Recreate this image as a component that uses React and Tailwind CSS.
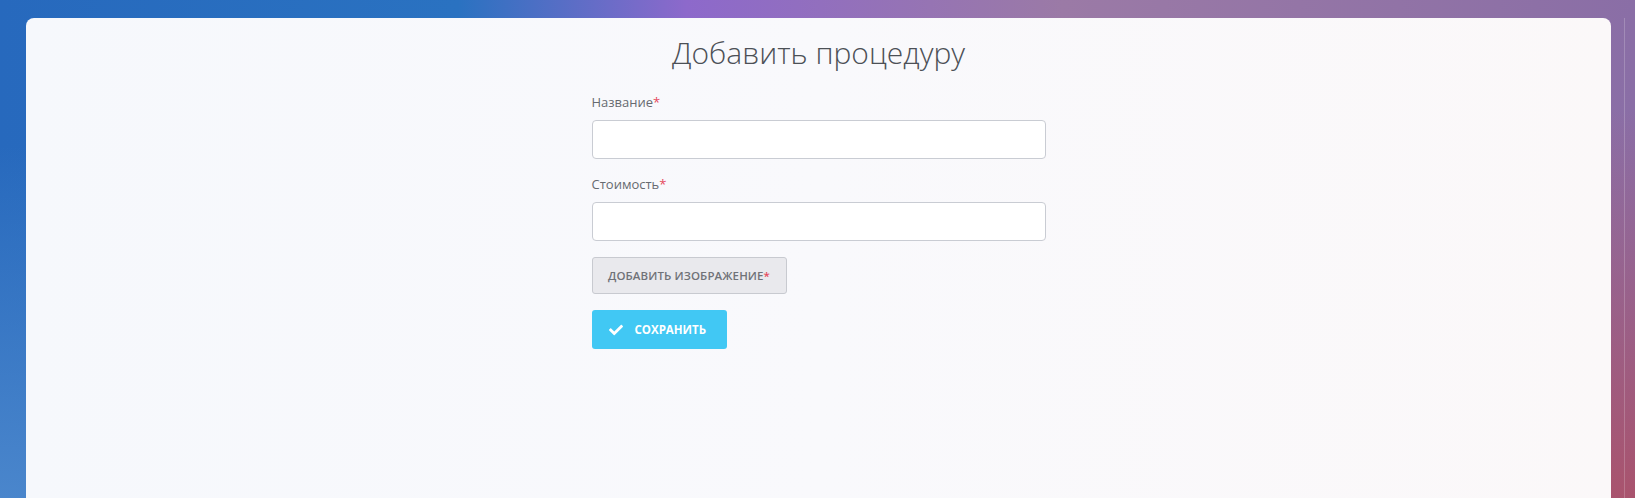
import React from 'react';
import { FaCheck } from 'react-icons/fa';

function Field({ label }) {
  return (
    <div className="flex flex-col">
      <label className="text-[13px] leading-[18px] text-[#666a70] mb-[9px]">
        {label}
        <span className="text-[#e5495d]">*</span>
      </label>
      <input
        type="text"
        className="h-[39px] w-full rounded-[4px] border border-[#c9ccd3] bg-white px-3 text-[14px] outline-none"
      />
    </div>
  );
}

export default function App() {
  return (
    <div
      className="flex h-[498px] w-full overflow-hidden pt-[18px] pl-[26px] bg-[radial-gradient(ellipse_at_100%_100%,#a9536d_0%,rgba(169,83,109,0)_55%),radial-gradient(ellipse_at_0%_100%,#4a86cc_0%,rgba(74,134,204,0)_50%),linear-gradient(90deg,#2769bd_0%,#2a72c1_28%,#8d69cb_42%,#9b7aa6_65%,#8a6ea6_100%)]"
      style={{ fontFamily: '"Open Sans", "Noto Sans", sans-serif' }}
    >
      <div className="flex-1 rounded-t-[8px] bg-[linear-gradient(90deg,#f6f8fc_0%,#f9f9fc_50%,#fbf8f9_100%)]">
        <div className="mx-auto flex w-[454px] flex-col pt-[15px]">
          <h1 className="text-center text-[30px] font-light leading-[40px] text-[#4c5056] mb-[20px]">
            Добавить процедуру
          </h1>
          <div className="flex flex-col gap-[16px]">
            <Field label="Название" />
            <Field label="Стоимость" />
          </div>
          <div className="mt-[16px]">
            <button className="h-[37px] w-[195px] rounded-[3px] border border-[#c8cad0] bg-[#e9e9ed] text-[11.5px] font-semibold tracking-[0.1px] text-[#707278]">
              ДОБАВИТЬ ИЗОБРАЖЕНИЕ<span className="text-[#e5495d]">*</span>
            </button>
          </div>
          <div className="mt-[16px]">
            <button className="flex h-[39px] w-[135px] items-center gap-[12px] rounded-[3px] bg-[#41c8f4] pl-[17px] text-[11.5px] font-bold text-white">
              <FaCheck size={14} />
              СОХРАНИТЬ
            </button>
          </div>
        </div>
      </div>
      <div className="w-[13px]" />
      <div className="w-px bg-white/20" />
      <div className="w-[10px]" />
    </div>
  );
}
